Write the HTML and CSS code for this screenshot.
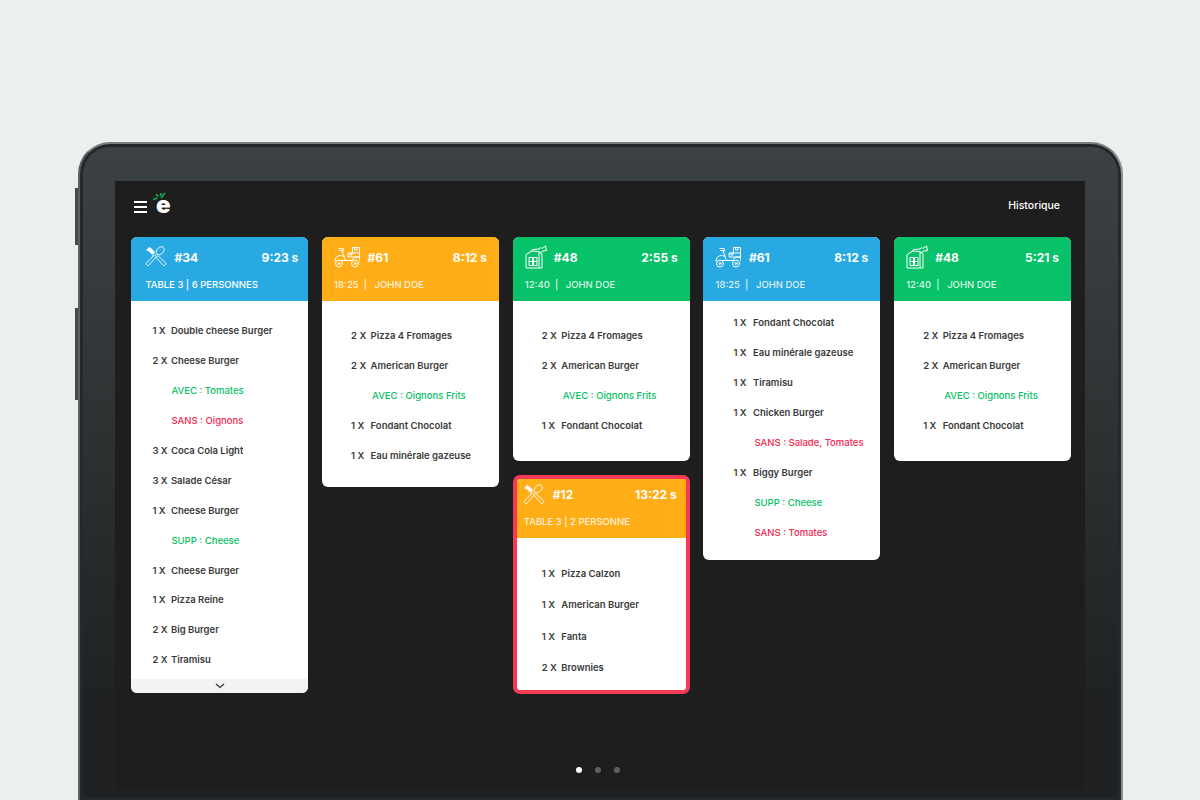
FILE: index.html
```html
<!DOCTYPE html>
<html lang="fr">
<head>
  <meta charset="UTF-8">
  <title>Commandes</title>
  <link rel="stylesheet" href="styles.css">
</head>
<body>
  <svg class="sprites" width="0" height="0">
    <symbol id="cutlery" viewBox="0 0 24 24">
      <g fill="none" stroke="currentColor" stroke-width="1" stroke-linejoin="round">
        <path d="M2.600 21.200l-1.200-1.200a1 1 0 0 1 0-1.400L10.600 9.400l2 2-8.600 9.800a1 1 0 0 1-1.400 0z"/>
        <path d="M12.600 8.600c-.9-1.900-.2-4.200 1.500-5.900 1.900-1.900 4.500-2.600 6-1.100s.8 4.100-1.100 6c-1.700 1.700-4 2.400-5.900 1.500z"/>
        <path d="M21.400 21.200l1.200-1.200a1 1 0 0 0 0-1.400L14 10.400l-2 2 8 8.800a1 1 0 0 0 1.400 0z"/>
        <path d="M9.600 11.400L7.800 9.600"/>
      </g>
      <path d="M1 4.600L4.600 1l2.200 1.400 3.800 3.800-.6 2.400-2.400.6-3.800-3.800z" fill="currentColor"/>
    </symbol>
    <symbol id="scooter" viewBox="0 0 26 22">
      <g fill="none" stroke="currentColor" stroke-width="1" stroke-linejoin="round" stroke-linecap="round">
        <path d="M14.500 7h4V1.500h7V11h-11z"/>
        <path d="M18.500 7h7M20.500 1.500v2.500h2.500V1.500M16 7v2h2V7"/>
        <path d="M5 2.500h4l.8 2-1.800 1.500M5.500 4.500h3"/>
        <path d="M8.500 6l3 8.500H7.500"/>
        <path d="M1 15c0-3.200 2.200-5.500 5.500-5.500 1.200 0 2.500.5 3.500 1.500"/>
        <path d="M11.500 14.500h7c0-2 1.500-3.500 3.500-3.500h3.500l.5 4"/>
        <circle cx="5" cy="17.500" r="3.500"/>
        <circle cx="21" cy="17.500" r="3.500"/>
        <circle cx="5" cy="17.500" r="1"/>
        <circle cx="21" cy="17.500" r="1"/>
      </g>
    </symbol>
    <symbol id="bag" viewBox="0 0 22 24">
      <g fill="none" stroke="currentColor" stroke-width="1" stroke-linejoin="round">
        <path d="M1 9.500l6-3.500 7 .5 3 2.500v14H1z"/>
        <path d="M5 7l3-2.500L14 4l2-1.500 1 1 3.500-2.500 1 4.500-3.500.5-2.500 1.500-1 1"/>
        <path d="M4 12.500h3.500v8H4zM8.500 12.500H12v8H8.500z"/>
        <path d="M4 16.500h3.500M8.500 16.500H12"/>
        <path d="M14 7v16"/>
      </g>
    </symbol>
  </svg>

  <div class="tablet">
    <span class="side-btn side-btn-top"></span>
    <span class="side-btn side-btn-low"></span>

    <div class="screen">
      <div class="topbar">
        <div class="brand">
          <div class="burger"><span></span><span></span><span></span></div>
          <div class="logo">
            <svg class="logo-leaf" width="14" height="9" viewBox="0 0 14 9">
              <path d="M0 7.500l4.500-1.500M3 2l2 2.500M8 6l4-5M7 4l1.500-3" fill="none" stroke="#0cb25a" stroke-width="1.600"/>
            </svg>
            <span class="logo-e">e</span>
          </div>
        </div>
        <span class="history">Historique</span>
      </div>

      <div class="board">
        <div class="column">
          <div class="card">
            <div class="card-head blue head-wide">
              <div class="head-top">
                <svg class="ico ico-cut"><use href="#cutlery"/></svg>
                <span class="num">#34</span>
                <span class="time">9:23 s</span>
              </div>
              <div class="head-sub head-sub-table">TABLE 3 | 6 PERSONNES</div>
            </div>
            <div class="card-body body-long">
              <div class="row"><b>1 X</b><span>Double cheese Burger</span></div>
              <div class="row"><b>2 X</b><span>Cheese Burger</span></div>
              <div class="row add"><span>AVEC : Tomates</span></div>
              <div class="row del"><span>SANS : Oignons</span></div>
              <div class="row"><b>3 X</b><span>Coca Cola Light</span></div>
              <div class="row"><b>3 X</b><span>Salade César</span></div>
              <div class="row"><b>1 X</b><span>Cheese Burger</span></div>
              <div class="row add"><span>SUPP : Cheese</span></div>
              <div class="row"><b>1 X</b><span>Cheese Burger</span></div>
              <div class="row"><b>1 X</b><span>Pizza Reine</span></div>
              <div class="row"><b>2 X</b><span>Big Burger</span></div>
              <div class="row"><b>2 X</b><span>Tiramisu</span></div>
            </div>
            <div class="more">
              <svg width="10" height="6" viewBox="0 0 10 6"><path d="M1 1l4 3.500L9 1" fill="none" stroke="#333" stroke-width="1.300"/></svg>
            </div>
          </div>
        </div>

        <div class="column">
          <div class="card">
            <div class="card-head orange">
              <div class="head-top">
                <svg class="ico ico-scooter"><use href="#scooter"/></svg>
                <span class="num">#61</span>
                <span class="time">8:12 s</span>
              </div>
              <div class="head-sub">18:25 &nbsp;|&nbsp;&nbsp; JOHN DOE</div>
            </div>
            <div class="card-body">
              <div class="row"><b>2 X</b><span>Pizza 4 Fromages</span></div>
              <div class="row"><b>2 X</b><span>American Burger</span></div>
              <div class="row add"><span>AVEC : Oignons Frits</span></div>
              <div class="row"><b>1 X</b><span>Fondant Chocolat</span></div>
              <div class="row"><b>1 X</b><span>Eau minérale gazeuse</span></div>
            </div>
          </div>
        </div>

        <div class="column">
          <div class="card">
            <div class="card-head green">
              <div class="head-top">
                <svg class="ico ico-bag"><use href="#bag"/></svg>
                <span class="num">#48</span>
                <span class="time">2:55 s</span>
              </div>
              <div class="head-sub">12:40 &nbsp;|&nbsp;&nbsp; JOHN DOE</div>
            </div>
            <div class="card-body body-short">
              <div class="row"><b>2 X</b><span>Pizza 4 Fromages</span></div>
              <div class="row"><b>2 X</b><span>American Burger</span></div>
              <div class="row add"><span>AVEC : Oignons Frits</span></div>
              <div class="row"><b>1 X</b><span>Fondant Chocolat</span></div>
            </div>
          </div>

          <div class="card card-late">
            <div class="card-head orange">
              <div class="head-top">
                <svg class="ico ico-cut"><use href="#cutlery"/></svg>
                <span class="num">#12</span>
                <span class="time">13:22 s</span>
              </div>
              <div class="head-sub">TABLE 3 | 2 PERSONNE</div>
            </div>
            <div class="card-body">
              <div class="row"><b>1 X</b><span>Pizza Calzon</span></div>
              <div class="row"><b>1 X</b><span>American Burger</span></div>
              <div class="row"><b>1 X</b><span>Fanta</span></div>
              <div class="row"><b>2 X</b><span>Brownies</span></div>
            </div>
          </div>
        </div>

        <div class="column">
          <div class="card">
            <div class="card-head blue">
              <div class="head-top">
                <svg class="ico ico-scooter"><use href="#scooter"/></svg>
                <span class="num">#61</span>
                <span class="time">8:12 s</span>
              </div>
              <div class="head-sub">18:25 &nbsp;|&nbsp;&nbsp; JOHN DOE</div>
            </div>
            <div class="card-body body-tall">
              <div class="row"><b>1 X</b><span>Fondant Chocolat</span></div>
              <div class="row"><b>1 X</b><span>Eau minérale gazeuse</span></div>
              <div class="row"><b>1 X</b><span>Tiramisu</span></div>
              <div class="row"><b>1 X</b><span>Chicken Burger</span></div>
              <div class="row del"><span>SANS : Salade, Tomates</span></div>
              <div class="row"><b>1 X</b><span>Biggy Burger</span></div>
              <div class="row add"><span>SUPP : Cheese</span></div>
              <div class="row del"><span>SANS : Tomates</span></div>
            </div>
          </div>
        </div>

        <div class="column">
          <div class="card">
            <div class="card-head green">
              <div class="head-top">
                <svg class="ico ico-bag"><use href="#bag"/></svg>
                <span class="num">#48</span>
                <span class="time">5:21 s</span>
              </div>
              <div class="head-sub">12:40 &nbsp;|&nbsp;&nbsp; JOHN DOE</div>
            </div>
            <div class="card-body body-short">
              <div class="row"><b>2 X</b><span>Pizza 4 Fromages</span></div>
              <div class="row"><b>2 X</b><span>American Burger</span></div>
              <div class="row add"><span>AVEC : Oignons Frits</span></div>
              <div class="row"><b>1 X</b><span>Fondant Chocolat</span></div>
            </div>
          </div>
        </div>
      </div>

      <div class="dots">
        <span class="dot on"></span>
        <span class="dot"></span>
        <span class="dot"></span>
      </div>
    </div>
  </div>
</body>
</html>
```

FILE: styles.css
```css
html, body {
  height: 100%;
  overflow: hidden;
}
body {
  margin: 0;
  background: #ecf0ed;
  font-family: Inter, "Liberation Sans", sans-serif;
}
.sprites {
  position: absolute;
}

.tablet {
  position: relative;
  box-sizing: border-box;
  width: 1045px;
  height: 658px;
  margin: 142px 0 0 78px;
  padding: 37px 36px 0 35px;
  background: linear-gradient(#3c4244, #2d3132 45%, #1f2122 85%);
  border: 2px solid #5c6061;
  border-top-color: #7b7f80;
  border-right-color: #8d9091;
  border-bottom: 0;
  border-radius: 32px 32px 0 0;
  box-shadow: inset 0 0 0 3px #24282a;
}
.side-btn {
  position: absolute;
  left: -5px;
  width: 3px;
  background: #44494b;
}
.side-btn-top {
  top: 44px;
  height: 57px;
}
.side-btn-low {
  top: 164px;
  height: 92px;
}

.screen {
  display: flex;
  flex-direction: column;
  height: 609px;
  background: #1e1e1e;
  position: relative;
}
.topbar {
  display: flex;
  align-items: center;
  justify-content: space-between;
  height: 56px;
  box-sizing: border-box;
  padding: 0 25px 8px 19px;
}
.brand {
  display: flex;
  align-items: center;
  gap: 7px;
}
.burger {
  display: flex;
  flex-direction: column;
  gap: 3.500px;
  margin-top: 4px;
}
.burger span {
  display: block;
  width: 13px;
  height: 1.500px;
  background: #fff;
}
.logo {
  position: relative;
  width: 16px;
  height: 22px;
}
.logo-leaf {
  position: absolute;
  left: -1px;
  top: -2px;
}
.logo-e {
  position: absolute;
  left: 2px;
  top: -1px;
  color: #fff;
  font-size: 24px;
  font-weight: 900;
  line-height: 24px;
}
.history {
  color: #fff;
  font-size: 10.500px;
  font-weight: 500;
}

.board {
  display: flex;
  gap: 13.800px;
  padding: 0 14px 0 16.400px;
  flex: 1;
}
.column {
  display: flex;
  flex-direction: column;
  gap: 14px;
  width: 177px;
}

.card {
  background: #fff;
  border-radius: 6px;
  overflow: hidden;
}
.card-head {
  box-sizing: border-box;
  height: 64px;
  padding: 7px 12px 0 12px;
  color: #fff;
}
.blue { background: #29a9e1; }
.orange { background: #ffae18; }
.green { background: #07c268; }

.head-top {
  display: flex;
  align-items: center;
  height: 26px;
}
.ico {
  flex: none;
  color: #fff;
}
.ico-cut {
  width: 22px;
  height: 24px;
  margin: 0 7px 0 2px;
}
.ico-scooter {
  width: 26px;
  height: 22px;
  margin-right: 7.500px;
}
.ico-bag {
  width: 22px;
  height: 24px;
  margin-right: 7px;
}
.num {
  font-size: 12px;
  font-weight: 700;
}
.time {
  margin-left: auto;
  font-size: 12px;
  font-weight: 700;
}
.head-sub {
  margin-top: 7px;
  font-size: 9.500px;
  line-height: 16px;
  font-weight: 500;
  white-space: nowrap;
  color: rgba(255, 255, 255, 0.85);
}
.head-sub-table {
  padding-left: 2px;
  color: #fff;
}
.head-wide {
  padding-right: 10px;
}

.card-body {
  padding: 20px 10px 16.500px 29px;
}
.body-short {
  padding-bottom: 20px;
}
.body-long {
  height: 378px;
  padding: 15px 10px 0 21px;
  box-sizing: border-box;
  overflow: hidden;
}
.body-long b {
  width: 14px;
}
.body-long .add, .body-long .del {
  padding-left: 19px;
}
.body-tall {
  padding: 7px 10px 13px 30px;
}
.row {
  display: flex;
  gap: 4.500px;
  height: 29.900px;
  align-items: center;
  font-size: 9.500px;
  font-weight: 600;
  color: #3a3a3a;
  white-space: nowrap;
}
.row b {
  width: 15px;
  font-weight: 600;
}
.body-long .row b {
  width: 14px;
}
.add {
  padding-left: 21px;
  color: #08bf66;
  font-weight: 500;
}
.del {
  padding-left: 21px;
  color: #f3284f;
  font-weight: 500;
}
.more {
  display: flex;
  justify-content: center;
  align-items: center;
  height: 14px;
  background: #f1f4f3;
}

.card-late {
  border: 4px solid #f23c55;
  border-radius: 7px;
}
.card-late .card-head {
  height: 59px;
  padding: 3px 9px 0 7px;
}
.card-late .ico-cut {
  margin: 0 8px 0 -1px;
}
.card-late .head-sub {
  margin-top: 6px;
}
.card-late .card-body {
  padding: 20px 6px 6px 25px;
}
.card-late .row {
  height: 31.500px;
}

.dots {
  display: flex;
  justify-content: center;
  gap: 13px;
  position: absolute;
  left: 461px;
  top: 586px;
}
.dot {
  width: 6px;
  height: 6px;
  border-radius: 50%;
  background: #5f6060;
}
.dot.on {
  background: #fff;
}
```
